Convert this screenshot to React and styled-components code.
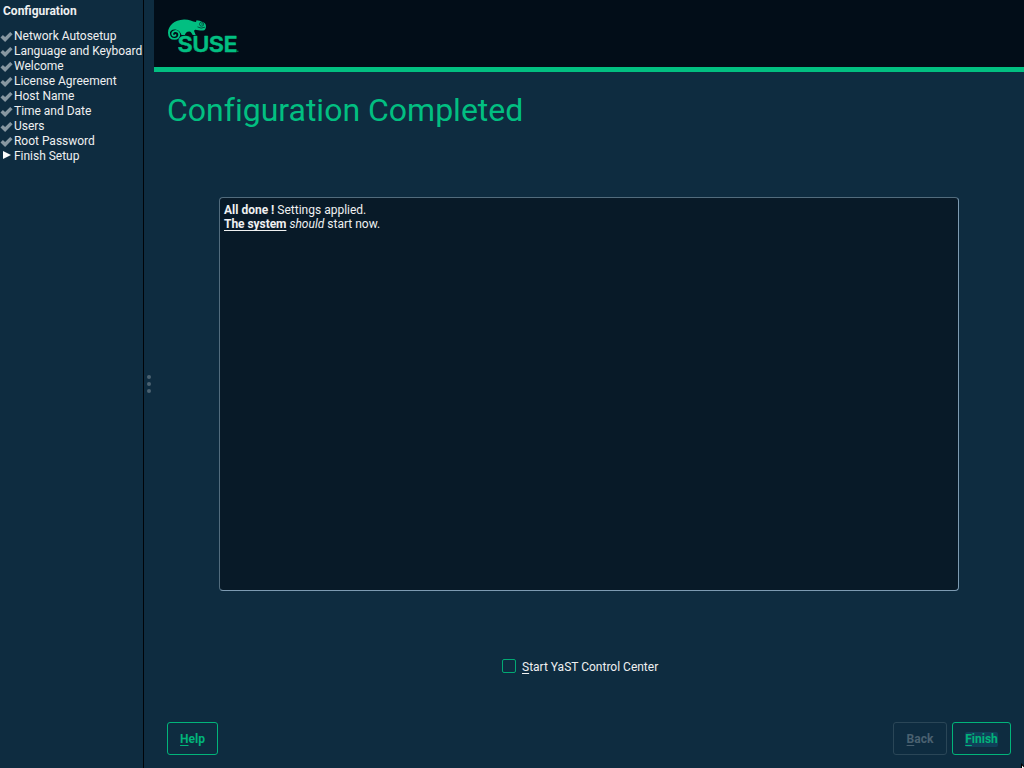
import React, { useState } from "react";
import styled, { createGlobalStyle, css } from "styled-components";

const GlobalStyle = createGlobalStyle`
  *, *::before, *::after { box-sizing: border-box; }
  html, body, #root { height: 100%; }
  body {
    margin: 0;
    overflow: hidden;
    background: #0e2c40;
    color: #eff0f1;
    font: 12px/15px Roboto, "Liberation Sans", sans-serif;
  }
`;

const Installer = styled.div`
  display: flex;
  height: 100%;
`;

const Sidebar = styled.nav`
  width: 144px;
  flex: none;
  border-right: 1px solid #000408;
  padding-top: 4px;
`;

const SidebarTitle = styled.h2`
  margin: 0 0 10px 3px;
  font-size: 12px;
  line-height: 15px;
  font-weight: 700;
`;

const StepList = styled.ol`
  list-style: none;
  margin: 0;
  padding: 0;
`;

const Step = styled.li`
  display: flex;
  height: 15px;
  white-space: nowrap;
  letter-spacing: -0.02px;

  svg {
    flex: none;
    width: 14px;
    height: 15px;
  }
`;

const Splitter = styled.div`
  width: 10px;
  flex: none;
  display: flex;
  flex-direction: column;
  align-items: center;
  justify-content: center;
  gap: 3px;
`;

const Grip = styled.i`
  width: 4px;
  height: 4px;
  border-radius: 50%;
  background: #4b6271;
`;

const Main = styled.main`
  flex: 1;
  display: flex;
  flex-direction: column;
`;

const Banner = styled.header`
  height: 72px;
  flex: none;
  background: #020d18;
  border-bottom: 5px solid #02bf81;
  padding: 16px 0 0 12px;

  svg { display: block; }
`;

const Title = styled.h1`
  margin: 19px 0 0 13px;
  font-size: 32px;
  line-height: 38px;
  font-weight: 400;
  font-variant-ligatures: none;
  color: #02bf81;
`;

const Report = styled.section`
  height: 394px;
  margin: 68px 65px 0;
  padding: 5px 4px;
  border: 1px solid;
  border-color: #526c7d #7d9bb2 #7d9bb2 #526c7d;
  border-radius: 4px;
  background: #081a28;
  line-height: 14px;

  p { margin: 0; }
`;

const Underlined = styled.strong`
  letter-spacing: -0.05px;
  text-decoration: underline;
  text-decoration-skip-ink: none;
  text-decoration-thickness: 1px;
  text-underline-offset: 2px;
`;

const Option = styled.label`
  display: flex;
  align-items: flex-start;
  gap: 6px;
  margin: 68px 0 0 348px;
`;

const OptionText = styled.span`
  padding-top: 1px;
`;

const CheckBox = styled.input`
  appearance: none;
  width: 14px;
  height: 14px;
  margin: 0;
  border: 1px solid #02a974;
  border-radius: 2px;
  &:checked { background: #02bf81; }
`;

const Mnemonic = styled.span`
  text-decoration: underline;
  text-decoration-skip-ink: none;
  text-decoration-thickness: 1px;
  text-underline-offset: 2px;
`;

const Footer = styled.footer`
  display: flex;
  gap: 5px;
  margin-top: auto;
  padding: 0 13px 13px;
`;

const Button = styled.button`
  width: ${(p) => p.$width}px;
  height: 33px;
  padding: 2px 0 0;
  border: 1px solid #02b47a;
  border-radius: 3px;
  background: transparent;
  color: #02b47a;
  font: inherit;
  font-weight: 700;
  ${(p) => p.$push && css`margin-left: auto;`}
  &:disabled {
    border-color: #2a4657;
    color: #4a6170;
  }
`;

const Focus = styled.span`
  display: inline-block;
  border-radius: 2px;
  background: #113f59;
`;

const Pointer = styled.svg`
  position: absolute;
  right: 0;
  bottom: 0;
  width: 3px;
  height: 5px;
`;

function CheckIcon() {
  return (
    <svg viewBox="0 0 14 15">
      <path d="M.5 8.4 2.9 6.1 5.1 8.1 10.2 3 12.6 5.2 5.1 12.9Z" fill="#8797a1" />
    </svg>
  );
}

function ArrowIcon() {
  return (
    <svg viewBox="0 0 14 15">
      <path d="M3 2 11 6 3 10Z" fill="#fcfcfc" />
    </svg>
  );
}

function SuseLogo() {
  return (
    <svg width="76" height="42" viewBox="0 0 76 42">
      <path
        fill="#02bf81"
        d="M2 17C2 10 8 4 18 3.6C23 3.4 26 5.6 30 6L30.5 4.3C35 5 38 6.2 39 7.5C40.6 9.6 40.2 13 38.3 14.2C35.5 15.2 32 14 29.3 13.8C27.9 14 28 15.4 28.8 16.7L29.7 19H26.7C25.3 17 24.9 15.8 23.3 15.6C20.5 15.6 19.5 17.4 18.8 19H15.5C14.6 16.6 13 14.2 9.5 13.6C6 13.2 4 15 3.6 17.5Z"
      />
      <path
        fill="none" stroke="#02bf81" strokeWidth="1.9" strokeLinecap="round"
        d="M3 17C3 20.8 5.4 22.9 8.6 22.9C11.6 22.9 13.4 20.8 13.2 18.4C13 16 11 14.8 9 15.1C6.9 15.4 6 17 6.3 18.4C6.6 20 8.8 20.4 9.5 19"
      />
      <path d="M31.5 10.9Q35 13.2 38.9 11.2" fill="none" stroke="#020d18" strokeWidth=".6" />
      <circle cx="35.6" cy="8.1" r="2.1" fill="#02bf81" stroke="#020d18" strokeWidth=".55" />
      <circle cx="36" cy="7.9" r=".55" fill="#020d18" />
      <text
        x="11.5" y="36.2" textLength="59.5" lengthAdjust="spacingAndGlyphs"
        fontFamily="Inter, sans-serif" fontWeight="600" fontSize="21.8" letterSpacing="-.5"
        fill="#02bf81" stroke="#02bf81" strokeWidth=".5" strokeLinejoin="round"
      >SUSE</text>
      <circle cx="71.8" cy="35.2" r=".8" fill="#02845d" />
    </svg>
  );
}

const steps = [
  "Network Autosetup",
  "Language and Keyboard",
  "Welcome",
  "License Agreement",
  "Host Name",
  "Time and Date",
  "Users",
  "Root Password",
  "Finish Setup",
];

export default function App() {
  const [startYast, setStartYast] = useState(false);
  return (
    <Installer>
      <GlobalStyle />
      <Sidebar>
        <SidebarTitle>Configuration</SidebarTitle>
        <StepList>
          {steps.map((step, i) => (
            <Step key={step}>
              {i < steps.length - 1 ? <CheckIcon /> : <ArrowIcon />}
              {step}
            </Step>
          ))}
        </StepList>
      </Sidebar>
      <Splitter><Grip /><Grip /><Grip /></Splitter>
      <Main>
        <Banner><SuseLogo /></Banner>
        <Title>Configuration Completed</Title>
        <Report>
          <p><strong>All done !</strong> Settings applied.</p>
          <p><Underlined>The system</Underlined> <em>should</em> start now.</p>
        </Report>
        <Option>
          <CheckBox type="checkbox" checked={startYast} onChange={(e) => setStartYast(e.target.checked)} />
          <OptionText><Mnemonic>S</Mnemonic>tart YaST Control Center</OptionText>
        </Option>
        <Footer>
          <Button $width={51}><Mnemonic>H</Mnemonic>elp</Button>
          <Button $width={54} $push disabled><Mnemonic>B</Mnemonic>ack</Button>
          <Button $width={59}><Focus><Mnemonic>F</Mnemonic>inish</Focus></Button>
        </Footer>
      </Main>
      <Pointer viewBox="0 0 3 5">
        <path d="M0 0 3 3V5H0Z" fill="#000" />
        <path d="M1 2.6 3 4.6V5H1Z" fill="#fff" />
      </Pointer>
    </Installer>
  );
}
